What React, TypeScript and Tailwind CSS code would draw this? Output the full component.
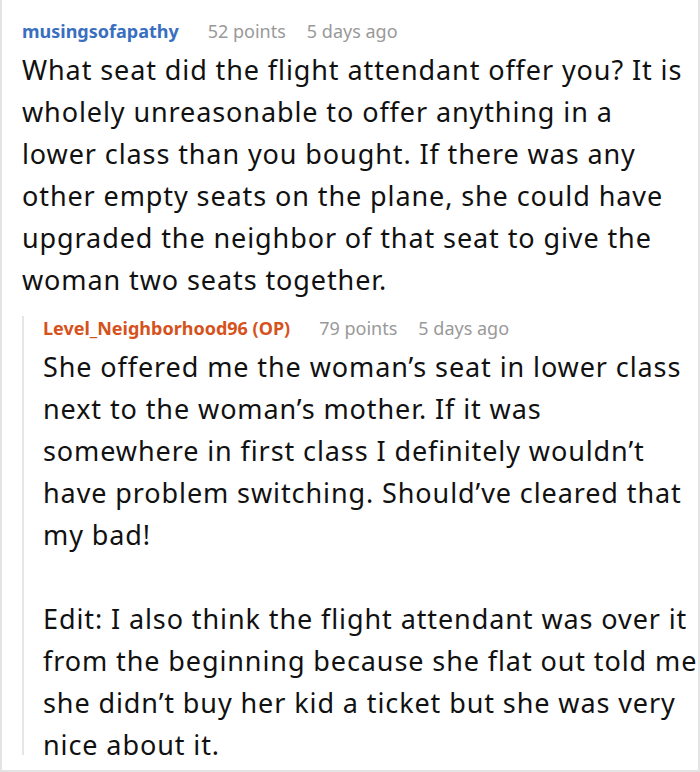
import React from "react";

type HeaderProps = {
  author: string;
  authorClass: string;
  points: string;
  age: string;
};

function Header({ author, authorClass, points, age }: HeaderProps) {
  return (
    <div className="flex items-baseline text-[18px] leading-[24px] whitespace-nowrap">
      <span className={`font-bold ${authorClass} mr-[29px]`}>{author}</span>
      <span className="text-[#999999] mr-[21px]">{points}</span>
      <span className="text-[#999999]">{age}</span>
    </div>
  );
}

// lines kept as in the original post so wrapping matches
function Body({ lines, className = "" }: { lines: string[]; className?: string }) {
  return (
    <p className={`text-[27px] leading-[42px] tracking-[0.9px] ${className}`}>
      {lines.map((l, i) => (
        <span key={i} className="block whitespace-nowrap">
          {l}
        </span>
      ))}
    </p>
  );
}

export default function App() {
  return (
    <div
      className="w-[700px] h-[772px] bg-white border-2 border-t-0 border-[#e3e3e3] text-[#111111] overflow-hidden"
      style={{ fontFamily: '"Noto Sans", "Open Sans", sans-serif' }}
    >
      <div className="pl-[20px] pr-[10px] pt-[19px]">
        <Header
          author="musingsofapathy"
          authorClass="text-[#3a6ec0]"
          points="52 points"
          age="5 days ago"
        />
        <Body
          className="mt-[6px]"
          lines={[
            "What seat did the flight attendant offer you? It is",
            "wholely unreasonable to offer anything in a",
            "lower class than you bought. If there was any",
            "other empty seats on the plane, she could have",
            "upgraded the neighbor of that seat to give the",
            "woman two seats together.",
          ]}
        />

        {/* reply: rule stops a little short of the last line, as in the source */}
        <div className="mt-[15px] h-[439px] border-l-2 border-[#e6e6e6] pl-[19px]">
          <Header
            author="Level_Neighborhood96 (OP)"
            authorClass="text-[#d6521c]"
            points="79 points"
            age="5 days ago"
          />
          <Body
            className="mt-[6px]"
            lines={[
              "She offered me the woman’s seat in lower class",
              "next to the woman’s mother. If it was",
              "somewhere in first class I definitely wouldn’t",
              "have problem switching. Should’ve cleared that",
              "my bad!",
            ]}
          />
          <Body
            className="mt-[42px]"
            lines={[
              "Edit: I also think the flight attendant was over it",
              "from the beginning because she flat out told me",
              "she didn’t buy her kid a ticket but she was very",
              "nice about it.",
            ]}
          />
        </div>
      </div>
    </div>
  );
}
